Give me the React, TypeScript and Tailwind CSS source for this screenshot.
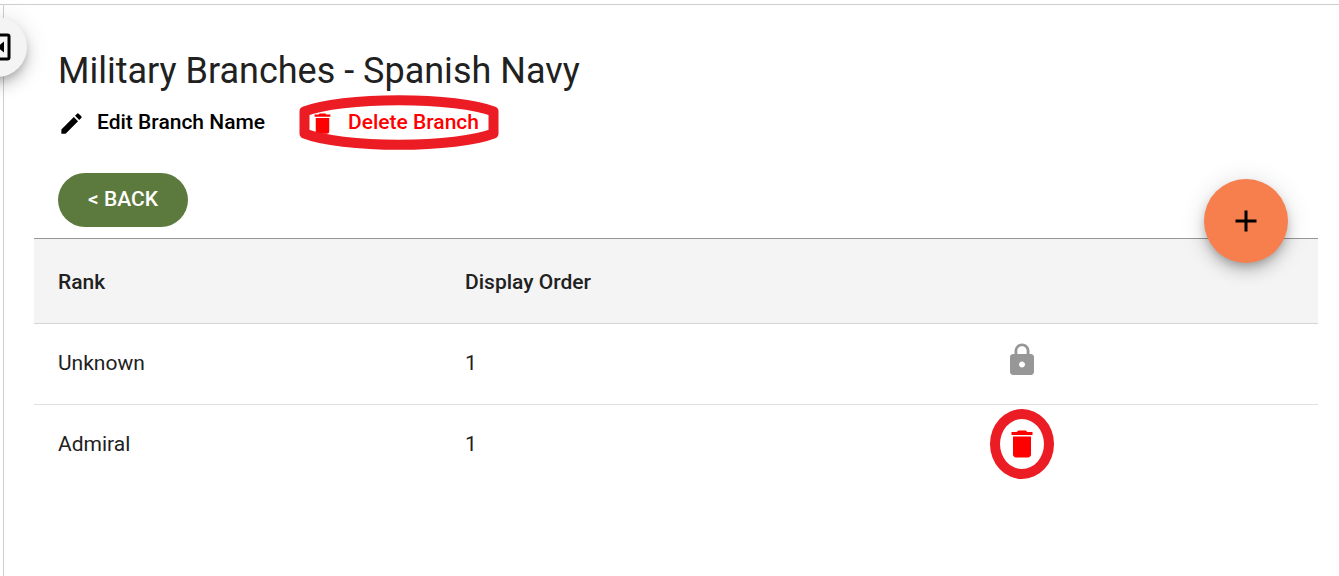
import { MdAdd, MdDelete, MdEdit, MdLock } from 'react-icons/md';

interface Rank {
  name: string;
  displayOrder: number;
  locked: boolean;
}

const ranks: Rank[] = [
  { name: 'Unknown', displayOrder: 1, locked: true },
  { name: 'Admiral', displayOrder: 1, locked: false }
];

export default function App() {
  return (
    <div className="relative flex min-h-screen flex-col overflow-hidden bg-white pt-1 font-['Roboto',sans-serif] text-[21px] text-[#212121]">
      <div className="flex flex-1 border-t border-[#cfcfcf] pl-[3px]">
        <main className="flex-1 border-l border-[#cfcfcf] pt-[42px] pr-[21px] pl-[30px]">
          {/* Title and branch actions */}
          <div className="px-6">
            <h1 className="text-4xl leading-[48px]">Military Branches - Spanish Navy</h1>
            <div className="mt-[10px] flex h-9 items-center gap-11 font-medium">
              <button type="button" className="flex items-center gap-3 text-black">
                <MdEdit className="size-[27px]" aria-hidden="true" />
                Edit Branch Name
              </button>
              <button type="button" className="relative flex items-center gap-3 text-[#ff0000]">
                <MdDelete className="size-[27px]" aria-hidden="true" />
                Delete Branch
                <svg
                  className="pointer-events-none absolute top-1/2 -left-[10px] h-[56px] w-[200px] -translate-y-1/2"
                  viewBox="0 0 200 56"
                  fill="none"
                  stroke="#ec1c24"
                  strokeWidth={10}
                  strokeLinejoin="round"
                  aria-hidden="true"
                >
                  <path d="M5.500 16.500A105 20 0 0 1 194.500 16.500V38.500A105 20 0 0 1 5.500 38.500Z" />
                </svg>
              </button>
            </div>
            <button
              type="button"
              className="mt-8 h-[54px] rounded-full bg-[#5d7a3e] px-[30px] font-medium text-white"
            >
              &lt; BACK
            </button>
          </div>

          {/* Ranks */}
          <div className="relative mt-[11px]">
            <table className="w-full table-fixed border-collapse text-left">
              <thead className="bg-[#f4f4f4]">
                <tr className="h-[85px] border-t border-b border-t-[#979797] border-b-[#d6d6d6]">
                  <th scope="col" className="w-[31.7%] px-6 pt-1 font-medium">Rank</th>
                  <th scope="col" className="w-[42%] px-6 pt-1 font-medium">Display Order</th>
                  <th scope="col" className="px-6" aria-label="Actions" />
                </tr>
              </thead>
              <tbody>
                {ranks.map((rank) => (
                  <tr key={rank.name} className="h-[81px] border-b border-[#e0e0e0] last:h-[79px] last:border-b-0">
                    <td className="px-6">{rank.name}</td>
                    <td className="px-6">{rank.displayOrder}</td>
                    <td className="px-6">
                      {rank.locked ? (
                        <MdLock className="mb-2 size-9 text-[#979797]" aria-hidden="true" />
                      ) : (
                        <button
                          type="button"
                          aria-label={`Delete ${rank.name}`}
                          className="relative block size-9 text-[#ff0000]"
                        >
                          <MdDelete className="size-9" aria-hidden="true" />
                          <span className="absolute top-1/2 left-1/2 h-[70px] w-16 -translate-1/2 rounded-[50%] border-10 border-[#ec1c24]" />
                        </button>
                      )}
                    </td>
                  </tr>
                ))}
              </tbody>
            </table>

            <button
              type="button"
              aria-label="Add rank"
              className="absolute -top-[59px] right-[30px] flex size-[84px] items-center justify-center rounded-full bg-[#f77e4d] text-black shadow-[0_5px_8px_-2px_rgba(0,0,0,0.2),0_9px_15px_0_rgba(0,0,0,0.14),0_2px_27px_0_rgba(0,0,0,0.12)]"
            >
              <MdAdd className="size-9" aria-hidden="true" />
            </button>
          </div>
        </main>
      </div>

      {/* Sidebar toggle */}
      <button
        type="button"
        aria-label="Toggle menu"
        className="absolute top-[17px] -left-[33px] flex size-[60px] items-center justify-center rounded-full bg-[#f4f4f4] text-black shadow-[0_5px_8px_-2px_rgba(0,0,0,0.2),0_9px_15px_0_rgba(0,0,0,0.14),0_2px_27px_0_rgba(0,0,0,0.12)]"
      >
        <svg className="size-9" viewBox="0 0 36 36" fill="none" aria-hidden="true">
          <rect x="6" y="6" width="24" height="24" rx="1.500" stroke="currentColor" strokeWidth={3} />
          <path d="M25 12.500V23.500L18 18Z" fill="currentColor" />
        </svg>
      </button>
    </div>
  );
}
